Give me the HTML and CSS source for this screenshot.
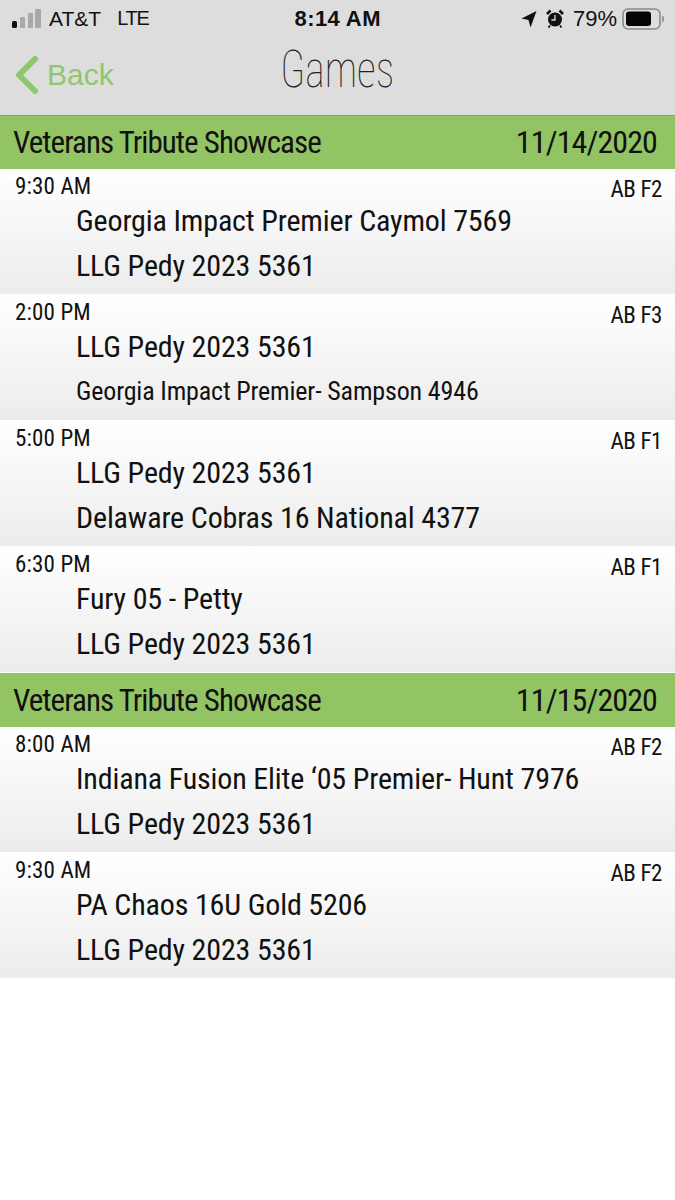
FILE: index.html
```html
<!DOCTYPE html>
<html lang="en">
<head>
    <meta charset="UTF-8">
    <meta name="viewport" content="width=device-width, initial-scale=1.0">
    <title>Games</title>
    <link rel="stylesheet" href="styles.css">
</head>
<body>

<div class="topbar">
    <div class="status">
        <div class="status-left">
            <svg width="32" height="20" viewBox="0 0 32 20">
                <rect x="1" y="12" width="5" height="7" rx="1.5" fill="#111"/>
                <rect x="9" y="8" width="5" height="11" rx="1" fill="#a9a9a9"/>
                <rect x="17" y="4" width="5" height="15" rx="1" fill="#a9a9a9"/>
                <rect x="24" y="0" width="6" height="19" rx="1" fill="#a9a9a9"/>
            </svg>
            <span>AT&amp;T</span>
            <span class="lte">LTE</span>
        </div>
        <div class="clock">8:14 AM</div>
        <div class="status-right">
            <svg width="16" height="18" viewBox="0 0 16 18"><path d="M15.5 1 L0.5 8.5 L7.5 10 L9.5 17.5 Z" fill="#111"/></svg>
            <svg width="18" height="19" viewBox="0 0 18 19">
                <circle cx="9" cy="10.5" r="7" fill="#111"/>
                <path d="M9 6 V11 H5.5" stroke="#ddd" stroke-width="1.3" fill="none"/>
                <path d="M1 5 L4.5 1.5 M17 5 L13.5 1.5" stroke="#111" stroke-width="2.6"/>
                <path d="M4 16.5 L2.5 18.5 M14 16.5 L15.5 18.5" stroke="#111" stroke-width="1.8"/>
            </svg>
            <span class="pct">79%</span>
            <svg class="battery" width="44" height="22" viewBox="0 0 44 22">
                <rect x="1" y="1" width="37" height="20" rx="5" fill="none" stroke="#8a8a8a" stroke-width="1.6"/>
                <rect x="4" y="3.5" width="25" height="14.5" rx="3" fill="#050505"/>
                <rect x="40" y="8" width="2" height="6" rx="1" fill="#999"/>
            </svg>
        </div>
    </div>
    <div class="nav">
        <a class="back">
            <svg width="26" height="42" viewBox="0 0 26 42"><path d="M21 5 L5 21 L21 37" fill="none" stroke="#8fc76d" stroke-width="6" stroke-linecap="round" stroke-linejoin="round"/></svg>
            <span>Back</span>
        </a>
        <div class="nav-title">Games</div>
    </div>
</div>

<div class="section first">
    <div class="event"><span>Veterans Tribute Showcase</span><span class="date">11/14/2020</span></div>
    <div class="game">
        <div class="game-top"><span>9:30 AM</span><span class="court">AB F2</span></div>
        <div class="team">Georgia Impact Premier Caymol 7569</div>
        <div class="team">LLG Pedy 2023 5361</div>
    </div>
    <div class="game">
        <div class="game-top"><span>2:00 PM</span><span class="court">AB F3</span></div>
        <div class="team">LLG Pedy 2023 5361</div>
        <div class="team small">Georgia Impact Premier- Sampson 4946</div>
    </div>
    <div class="game">
        <div class="game-top"><span>5:00 PM</span><span class="court">AB F1</span></div>
        <div class="team">LLG Pedy 2023 5361</div>
        <div class="team">Delaware Cobras 16 National 4377</div>
    </div>
    <div class="game">
        <div class="game-top"><span>6:30 PM</span><span class="court">AB F1</span></div>
        <div class="team">Fury 05 - Petty</div>
        <div class="team">LLG Pedy 2023 5361</div>
    </div>
</div>

<div class="section">
    <div class="event"><span>Veterans Tribute Showcase</span><span class="date">11/15/2020</span></div>
    <div class="game">
        <div class="game-top"><span>8:00 AM</span><span class="court">AB F2</span></div>
        <div class="team">Indiana Fusion Elite ‘05 Premier- Hunt 7976</div>
        <div class="team">LLG Pedy 2023 5361</div>
    </div>
    <div class="game">
        <div class="game-top"><span>9:30 AM</span><span class="court">AB F2</span></div>
        <div class="team">PA Chaos 16U Gold 5206</div>
        <div class="team">LLG Pedy 2023 5361</div>
    </div>
</div>

</body>
</html>
```

FILE: styles.css
```css
body {
    margin: 0;
    background: white;
    font-family: "Roboto", sans-serif;
    font-stretch: 75%;
    color: #111;
}
.topbar {
    height: 115px;
    background: #dddddd;
}
.status {
    height: 37px;
    display: flex;
    align-items: center;
    justify-content: space-between;
    padding: 0 9px 0 11px;
    font-family: "Liberation Sans", sans-serif;
    font-size: 21px;
}
.status-left, .status-right {
    display: flex;
    align-items: center;
    gap: 6px;
}
.lte {
    margin-left: 10px;
    font-size: 20px;
    letter-spacing: -1.3px;
}
.clock {
    font-weight: bold;
    font-size: 22px;
    letter-spacing: 0.4px;
    margin-left: 6px;
}
.status-right {
    gap: 9px;
}
.battery {
    margin-left: -4px;
}
.pct {
    font-size: 22px;
}
.nav {
    height: 78px;
    position: relative;
    display: flex;
    align-items: center;
    justify-content: center;
}
.back {
    position: absolute;
    left: 14px;
    top: 17px;
    display: flex;
    align-items: center;
    gap: 7px;
    color: #8fc76d;
    font-family: "Liberation Sans", sans-serif;
    font-size: 30px;
}
.nav-title {
    font-size: 52px;
    font-weight: 100;
    color: #222;
    margin-bottom: 14px;
    transform: scaleX(0.8);
}
.event {
    height: 54px;
    background: #93c464;
    display: flex;
    align-items: center;
    justify-content: space-between;
    padding: 0 18px 0 13px;
    font-size: 31px;
    letter-spacing: -0.95px;
}
.first .event {
    box-shadow: inset 0 1px #7fa85f;
}
.date {
    font-size: 32px;
    letter-spacing: -0.9px;
}
.game {
    height: 125px;
    margin-bottom: 1px;
    box-sizing: border-box;
    padding: 4px 13px 0 15px;
    background: linear-gradient(#ffffff, #ececec);
}
.game-top {
    display: flex;
    justify-content: space-between;
    font-size: 23px;
    letter-spacing: 0.15px;
    height: 25px;
}
.court {
    margin-top: 3px;
    letter-spacing: -0.4px;
}
.team {
    margin-left: 61px;
    font-size: 30px;
    height: 45px;
    line-height: 45px;
    letter-spacing: -0.15px;
}
.team.small {
    font-size: 26px;
}
```
